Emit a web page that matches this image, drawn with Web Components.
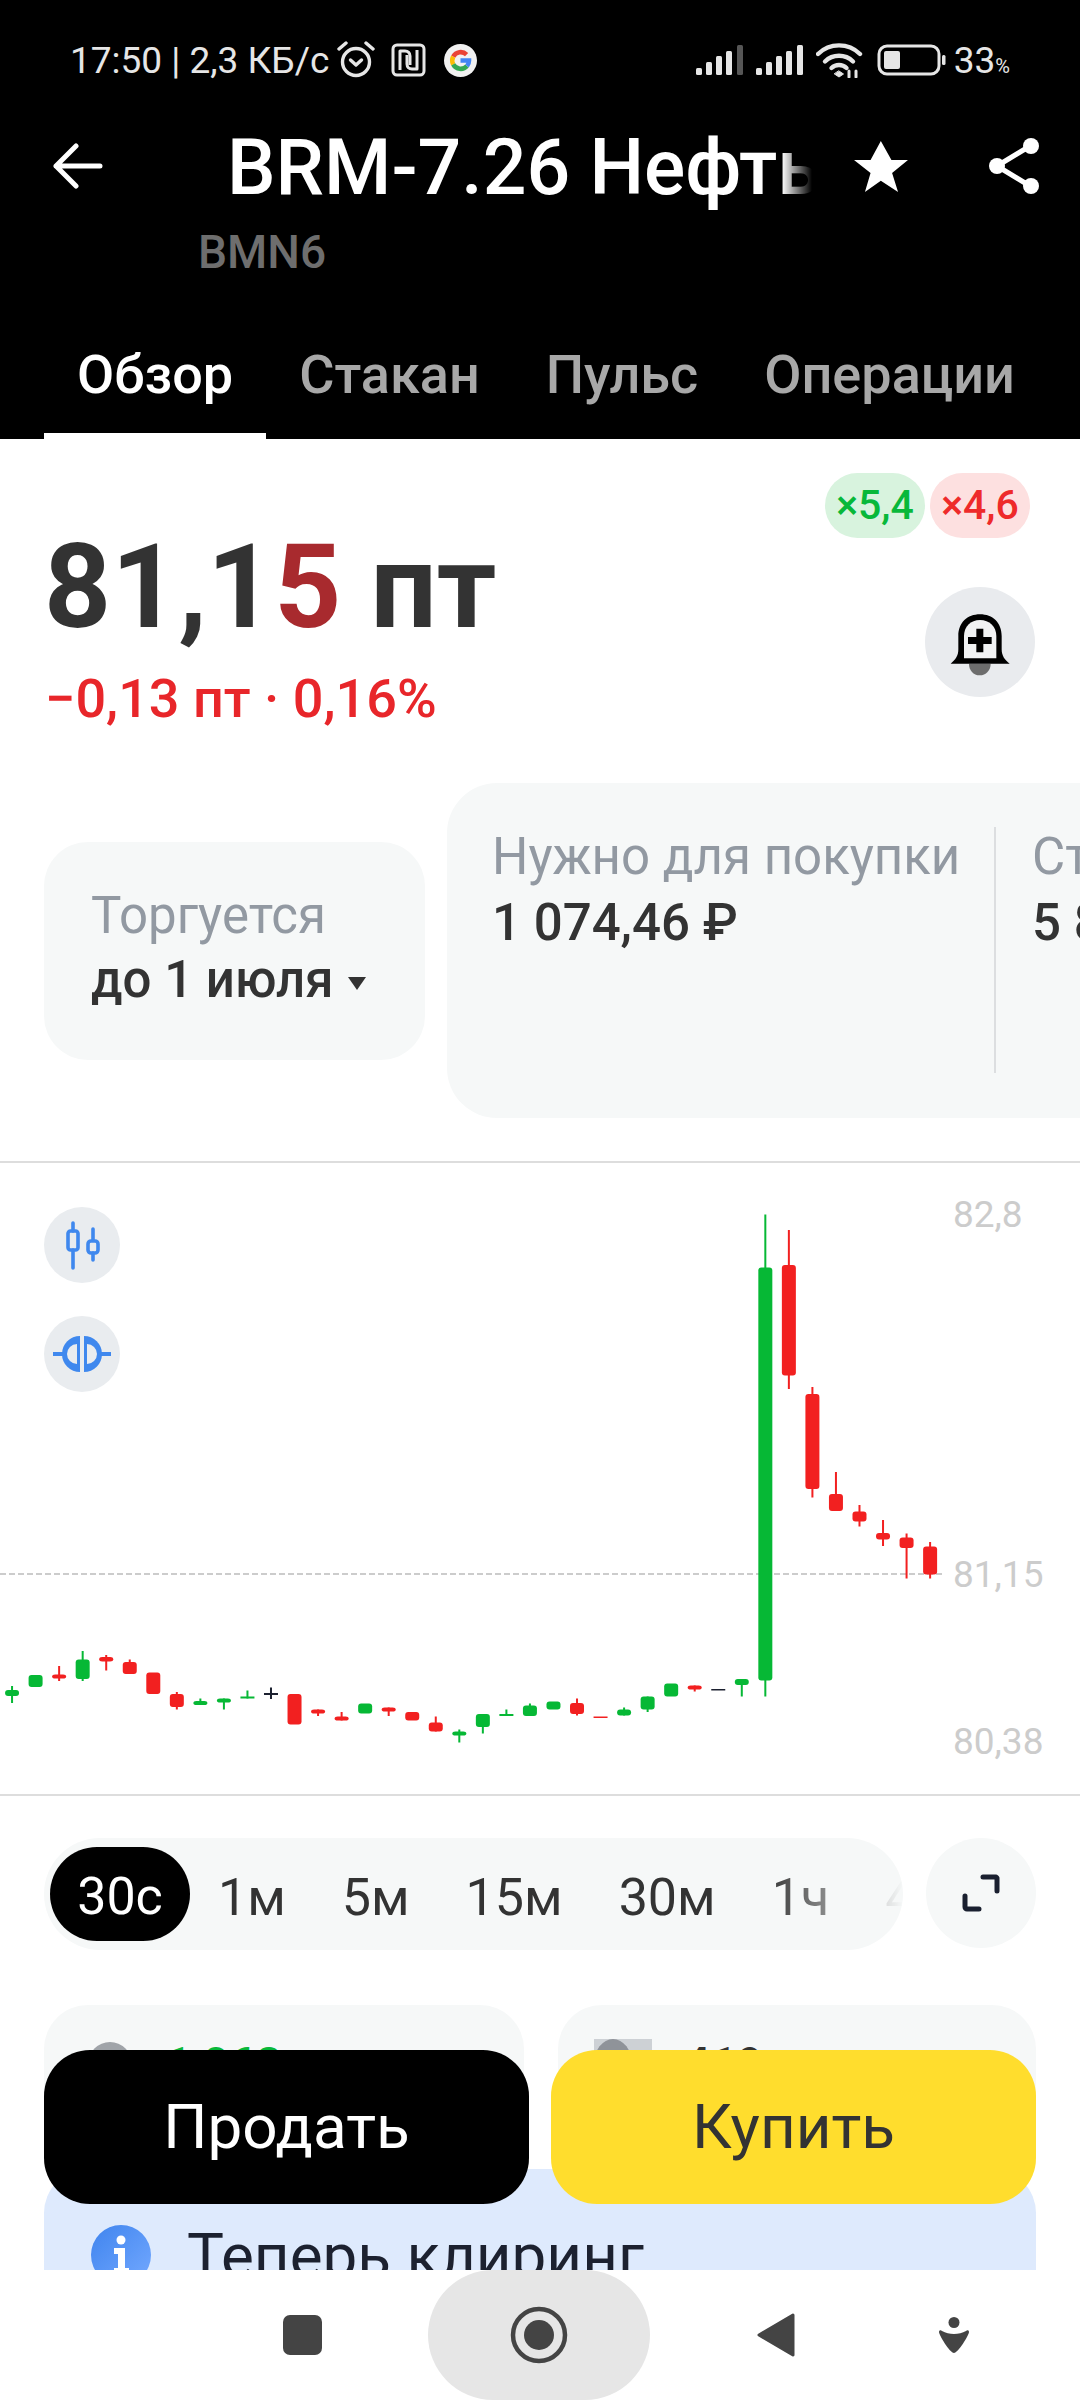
<!DOCTYPE html>
<html lang="ru">
<head>
<meta charset="utf-8">
<title>BRM-7.26</title>
<style>
  html, body { margin: 0; padding: 0; }
  body {
    width: 1080px;
    height: 2400px;
    display: flex;
    flex-direction: column;
    overflow: hidden;
    background: #fff;
    color: #333;
    font-family: Roboto, "Liberation Sans", sans-serif;
  }
  main {
    flex: 1;
    min-height: 0;
    position: relative;
    overflow: hidden;
  }
</style>
</head>
<body>
<app-header></app-header>
<main>
  <quote-head></quote-head>
  <info-cards></info-cards>
  <candle-chart></candle-chart>
  <timeframe-bar></timeframe-bar>
  <stat-cards></stat-cards>
  <notice-card>Теперь клиринг</notice-card>
  <action-buttons></action-buttons>
</main>
<nav-bar></nav-bar>

<script>
class AppHeader extends HTMLElement {
  constructor () {
    super()
    this.shadow = this.attachShadow({ mode: 'open' })
  }

  connectedCallback () {
    this.shadow.innerHTML =
      /* html */`
      <style>
        :host { display: block; background: #000; color: #fff; height: 439px; overflow: hidden; }
        .status { height: 120px; display: flex; align-items: center; justify-content: space-between; padding: 0 70px; box-sizing: border-box; font-size: 37px; color: #e6e6e6; }
        .group { display: flex; align-items: center; }
        .status svg { display: block; flex: none; }
        .pct { font-size: 20px; align-self: flex-end; margin-bottom: 4px; }
        .title-row { height: 92px; display: flex; align-items: center; }
        .back { margin-left: 53px; width: 50px; }
        .title { margin-left: 124px; width: 585px; padding-top: 4px; font-size: 77px; font-weight: 500; white-space: nowrap; overflow: hidden; line-height: 92px; -webkit-mask-image: linear-gradient(to right, #000 555px, transparent 585px); mask-image: linear-gradient(to right, #000 555px, transparent 585px); }
        .star { margin-left: 42px; }
        .share { margin-left: 81px; }
        .sub { height: 80px; line-height: 80px; padding-left: 198px; font-size: 46px; font-weight: 500; color: #6e6e6e; }
        .tabs { height: 147px; padding-left: 44px; display: flex; }
        .tab { padding: 0 33px; height: 147px; box-sizing: border-box; line-height: 166px; font-size: 54px; font-weight: 500; color: #a8a8a8; white-space: nowrap; }
        .tab.on { color: #fff; border-bottom: 6px solid #fff; }
      </style>
      <div class="status">
        <div class="group">
          <span>17:50 | 2,3 КБ/с</span>
          <svg style="margin-left:8px" width="38" height="38" viewBox="0 0 38 38" fill="none" stroke="#e6e6e6" stroke-width="3.4" stroke-linecap="round" stroke-linejoin="round"><circle cx="19" cy="21" r="13.5"/><path d="M13.5 19l5.5 5 5.5-5"/><path d="M2 8l7-6M36 8l-7-6"/></svg>
          <svg style="margin-left:16px" width="35" height="34" viewBox="0 0 35 34" fill="none" stroke="#e6e6e6" stroke-width="3" stroke-linejoin="round"><rect x="2" y="2" width="31" height="30" rx="4"/><path d="M9 27V8h5c3 0 5 2 5 5v9"/><path d="M26 7v19h-5c-3 0-5-2-5-5v-9"/></svg>
          <svg style="margin-left:18px" width="33" height="33" viewBox="0 0 33 33" fill="none"><circle cx="16.5" cy="16.5" r="16.5" fill="#f1f1f1"/><g stroke-width="4.6"><path d="M9.2 12.6A8.5 8.5 0 0 1 22.6 10.6" stroke="#ea4335"/><path d="M9.2 20.4A8.5 8.5 0 0 1 9.2 12.6" stroke="#fbbc05"/><path d="M23 22A8.5 8.5 0 0 1 9.2 20.4" stroke="#34a853"/><path d="M16.5 16.5H25A8.5 8.5 0 0 1 23 22" stroke="#4285f4"/></g></svg>
        </div>
        <div class="group">
          <svg width="47" height="32" viewBox="0 0 47 32" fill="#e6e6e6"><rect y="24" width="6" height="7" rx="1.5"/><rect x="10" y="18" width="6" height="13" rx="1.5"/><rect x="20" y="12" width="6" height="19" rx="1.5"/><rect x="30" y="7" width="6" height="24" rx="1.5"/><rect x="41" y="1" width="6" height="30" rx="1.5" fill="#565656"/></svg>
          <svg style="margin-left:13px" width="47" height="32" viewBox="0 0 47 32" fill="#e6e6e6"><rect y="24" width="6" height="7" rx="1.5"/><rect x="10" y="18" width="6" height="13" rx="1.5"/><rect x="20" y="12" width="6" height="19" rx="1.5"/><rect x="30" y="7" width="6" height="24" rx="1.5"/><rect x="41" y="1" width="6" height="30" rx="1.5"/></svg>
          <svg style="margin-left:13px" width="48" height="36" viewBox="0 0 48 36" fill="none" stroke="#e6e6e6" stroke-width="4.4" stroke-linecap="round"><path d="M2 12a30 30 0 0 1 42 0"/><path d="M9 19.500a20 20 0 0 1 28 0"/><path d="M15.500 26a11 11 0 0 1 15 0"/><path d="M18.500 32l4.500 3 4.500-3-4.500-3z" fill="#e6e6e6" stroke-width="1"/><path d="M33 35v-6M40 29v6" stroke-width="3"/></svg>
          <svg style="margin-left:13px" width="70" height="32" viewBox="0 0 70 32" fill="none"><rect x="2" y="2" width="60" height="28" rx="8" stroke="#e6e6e6" stroke-width="3"/><rect x="7" y="7" width="16" height="18" rx="2" fill="#e6e6e6"/><rect x="65" y="11" width="3.500" height="10" rx="1.500" fill="#e6e6e6"/></svg>
          <span style="margin-left:7px">33</span><span class="pct">%</span>
        </div>
      </div>
      <div class="title-row">
        <svg class="back" height="46" viewBox="0 0 50 46" fill="none" stroke="#fff" stroke-width="5" stroke-linecap="round" stroke-linejoin="round"><path d="M47 23H3M23 3L3 23l20 20"/></svg>
        <div class="title">BRM-7.26 Нефть</div>
        <svg class="star" width="54" height="51" viewBox="222 68 163 154" fill="#fff"><path d="M303 68l32 57h50l-48 40 18 57-52-34-48 34 17-57-50-40h50z"/></svg>
        <svg class="share" width="50" height="56" viewBox="0 0 50 56" fill="#fff" stroke="#fff"><path d="M8 28L41 8M8 28l33 20" fill="none" stroke-width="5"/><circle cx="8" cy="28" r="8" stroke="none"/><circle cx="42" cy="8" r="8" stroke="none"/><circle cx="42" cy="48" r="8" stroke="none"/></svg>
      </div>
      <div class="sub">BMN6</div>
      <div class="tabs">
        <div class="tab on">Обзор</div>
        <div class="tab">Стакан</div>
        <div class="tab">Пульс</div>
        <div class="tab">Операции</div>
      </div>
      `
  }
}

class QuoteHead extends HTMLElement {
  constructor () {
    super()
    this.shadow = this.attachShadow({ mode: 'open' })
  }

  connectedCallback () {
    this.shadow.innerHTML =
      /* html */`
      <style>
        :host { display: grid; grid-template-columns: 1fr auto; height: 344px; padding: 0 45px 0 44px; box-sizing: border-box; }
        .left { padding-top: 78px; }
        .price { font-size: 117px; line-height: 140px; font-weight: 700; color: #333; white-space: nowrap; }
        .price b { color: #a82a2e; font-weight: 700; }
        .change { margin: 12px 0 0 1px; font-size: 54px; line-height: 60px; font-weight: 500; color: #e8262a; white-space: nowrap; }
        .right { padding-top: 34px; display: flex; flex-direction: column; align-items: flex-end; }
        .badges { display: flex; gap: 5px; margin-right: 5px; }
        .badge { height: 65px; line-height: 65px; width: 100px; text-align: center; border-radius: 33px; font-size: 41px; font-weight: 500; white-space: nowrap; }
        .long { background: #d8f3de; color: #08b83a; }
        .short { background: #fde0e0; color: #ee2a2a; }
        .bell { margin-top: 49px; width: 110px; height: 110px; border-radius: 50%; background: #e9ebee; display: flex; align-items: center; justify-content: center; }
      </style>
      <div class="left">
        <div class="price">81,1<b>5</b> пт</div>
        <div class="change">−0,13 пт · 0,16%</div>
      </div>
      <div class="right">
        <div class="badges"><div class="badge long">×5,4</div><div class="badge short">×4,6</div></div>
        <div class="bell">
          <svg width="70" height="70" viewBox="78 78 210 210"><path d="M150 248h65c0 20-14 35-33 35s-32-15-32-35z" fill="#6d6d6d"/><path d="M95 248c15-13 23-23 23-43v-40c0-40 27-65 65-65s65 25 65 65v40c0 20 10 33 24 43z" fill="#000"/><path d="M135 232v-67c0-28 20-48 48-48s49 20 49 48v67z" fill="#f1f2f3"/><path d="M172 143h21v25h25v21h-25v25h-21v-25h-25v-21h25z" fill="#000"/></svg>
        </div>
      </div>
      `
  }
}

class InfoCards extends HTMLElement {
  constructor () {
    super()
    this.shadow = this.attachShadow({ mode: 'open' })
  }

  connectedCallback () {
    this.shadow.innerHTML =
      /* html */`
      <style>
        :host { display: flex; align-items: center; gap: 22px; height: 335px; margin-bottom: 43px; padding-left: 44px; overflow: hidden; white-space: nowrap; }
        .card { flex: none; background: #f6f8f8; box-sizing: border-box; font-size: 51px; line-height: 64px; }
        .label { color: #9299a2; }
        .value { color: #333; font-weight: 500; }
        .expiry { width: 381px; height: 218px; border-radius: 44px; padding: 0 0 6px 47px; display: flex; flex-direction: column; justify-content: center; }
        .arrow { display: inline-block; margin-left: 14px; vertical-align: 7px; border: 9px solid transparent; border-top: 13px solid #333; border-bottom: 0; }
        .costs { width: 700px; height: 335px; border-radius: 50px; padding: 44px 0 0 45px; display: flex; }
        .col { height: 246px; }
        .col .label { position: relative; top: -2px; }
        .need { width: 502px; border-right: 2px solid #dcdee0; }
        .cost { padding-left: 36px; }
      </style>
      <div class="card expiry">
        <div class="label">Торгуется</div>
        <div class="value">до 1 июля<span class="arrow"></span></div>
      </div>
      <div class="card costs">
        <div class="col need">
          <div class="label">Нужно для покупки</div>
          <div class="value">1 074,46 ₽</div>
        </div>
        <div class="col cost">
          <div class="label">Ст</div>
          <div class="value">5 8</div>
        </div>
      </div>
      `
  }
}

class CandleChart extends HTMLElement {
  constructor () {
    super()
    this.shadow = this.attachShadow({ mode: 'open' })

    // color, wick top, wick bottom, body top, body bottom (px from the top of the chart)
    this.data = [
      ['g', 524, 541, 528, 534], ['g', 0, 0, 513, 525], ['r', 504, 519, 512.5, 516.5], ['g', 489, 519, 497.5, 517],
      ['r', 493, 508.5, 495, 499.5], ['r', 497.5, 512, 500, 512], ['r', 0, 0, 510.5, 532], ['r', 530, 547.5, 532, 545],
      ['g', 536.5, 543, 539, 543], ['g', 536.5, 547.5, 536.5, 540.5], ['g', 528.5, 536.5, 534.5, 536.5], ['k', 525.5, 537, 531, 533],
      ['r', 0, 0, 532, 562.5], ['r', 547.5, 554, 547.5, 551.5], ['r', 550, 558.5, 554.5, 558.5], ['g', 0, 0, 541.5, 551.5],
      ['r', 545.5, 554, 545.5, 549.5], ['r', 0, 0, 550, 558.5], ['r', 554.5, 569.5, 560.5, 569.5], ['g', 567.5, 580.5, 569.5, 573.5],
      ['g', 552, 571.5, 552, 565], ['g', 547.5, 554, 552, 554], ['g', 541.5, 554, 543.5, 554], ['g', 0, 0, 539.5, 547.5],
      ['r', 536.5, 553.5, 541, 552], ['r', 0, 0, 554.5, 556], ['g', 545.5, 553.5, 547.5, 553.5], ['g', 534.5, 550, 534.5, 547.5],
      ['g', 0, 0, 521.5, 534.5], ['r', 523.5, 529.5, 523.5, 527.5], ['k', 0, 0, 527, 528.5], ['g', 517, 534.5, 517, 523],
      ['g', 52.5, 534.5, 105.5, 518.5], ['r', 68, 227, 103, 213.5], ['r', 225, 335.5, 232, 327], ['r', 310, 349, 332, 349],
      ['r', 343, 364.5, 349.5, 359.5], ['r', 358, 384, 371, 377.5], ['r', 371.5, 416.5, 375.5, 386], ['r', 380, 416.5, 384.5, 412.5]
    ]
  }

  connectedCallback () {
    const colors = { g: '#06b835', r: '#f22020', k: '#1c2130' }
    const candles = this.data.map((candle, i) => {
      const [color, wickTop, wickBottom, bodyTop, bodyBottom] = candle
      const x = 12.05 + i * 23.54
      const fill = colors[color]
      const wick = wickTop ? `<rect x="${x - 1}" y="${wickTop}" width="2" height="${wickBottom - wickTop}" fill="${fill}"/>` : ''
      const thin = bodyBottom - bodyTop < 3
      return `${wick}<rect x="${x - 7}" y="${bodyTop}" width="14" height="${bodyBottom - bodyTop}" rx="${thin ? 0 : 3}" fill="${fill}"/>`
    }).join('')

    this.shadow.innerHTML =
      /* html */`
      <style>
        :host { display: block; position: relative; height: 635px; box-sizing: border-box; border-top: 2px solid #dddddd; border-bottom: 2px solid #dddddd; }
        svg.plot { position: absolute; left: 0; top: -1px; }
        .tool { position: absolute; left: 44px; width: 76px; height: 76px; border-radius: 50%; background: #e9ecef; display: flex; align-items: center; justify-content: center; }
        .price { position: absolute; left: 953px; font-size: 37px; line-height: 44px; color: #cccccc; }
      </style>
      <svg class="plot" width="1080" height="633" viewBox="0 0 1080 633">
        <line x1="0" y1="412" x2="942" y2="412" stroke="#cccccc" stroke-width="2" stroke-dasharray="6 3"/>
        ${candles}
      </svg>
      <div class="tool" style="top:44px">
        <svg width="40" height="50" viewBox="0 0 40 50" fill="none" stroke="#3f88ee" stroke-width="3.6" stroke-linecap="round" stroke-linejoin="round"><path d="M11 3v8M11 30v18"/><rect x="6" y="11" width="10" height="19" rx="2.500"/><path d="M31 9v11M31 33v7"/><rect x="26" y="21" width="10" height="12" rx="3"/></svg>
      </div>
      <div class="tool" style="top:153px">
        <svg width="58" height="36" viewBox="0 0 58 36" fill="#3f88ee"><path d="M0 16h10v4H0zM48 16h10v4H48z"/><path d="M27 0v36a18 18 0 0 1 0-36z"/><path d="M31 0a18 18 0 0 1 0 36z"/><path d="M24 8v20a10 10 0 0 1 0-20zM34 8a10 10 0 0 1 0 20z" fill="#e9ecef"/></svg>
      </div>
      <div class="price" style="top:30px">82,8</div>
      <div class="price" style="top:390px">81,15</div>
      <div class="price" style="top:557px">80,38</div>
      `
  }
}

class TimeframeBar extends HTMLElement {
  constructor () {
    super()
    this.shadow = this.attachShadow({ mode: 'open' })
  }

  connectedCallback () {
    const frames = ['1м', '5м', '15м', '30м', '1ч', '4ч']
    this.shadow.innerHTML =
      /* html */`
      <style>
        :host { display: flex; gap: 23px; margin: 42px 44px 0 44px; height: 112px; }
        .bar { flex: none; width: 859px; background: #f6f8f8; border-radius: 56px; box-sizing: border-box; padding: 9px 0 9px 6px; overflow: hidden; }
        .items { display: flex; align-items: center; height: 94px; font-size: 52px; color: #333; white-space: nowrap; -webkit-mask-image: linear-gradient(to right, #000 715px, transparent 853px); mask-image: linear-gradient(to right, #000 715px, transparent 853px); }
        .item { padding: 6px 28px 0; }
        .on { flex: none; width: 140px; height: 94px; line-height: 100px; border-radius: 47px; background: #000; color: #fff; text-align: center; }
        .expand { width: 110px; height: 110px; border-radius: 50%; background: #f6f8f8; display: flex; align-items: center; justify-content: center; }
      </style>
      <div class="bar">
        <div class="items">
          <div class="on">30с</div>
          ${frames.map(frame => `<div class="item">${frame}</div>`).join('')}
        </div>
      </div>
      <div class="expand">
        <svg width="40" height="40" viewBox="0 0 40 40" fill="none" stroke="#1a2030" stroke-width="5" stroke-linecap="round" stroke-linejoin="round"><path d="M22 4h13a2 2 0 0 1 1 1v13M4 23v11a2 2 0 0 0 2 2h12"/></svg>
      </div>
      `
  }
}

class StatCards extends HTMLElement {
  constructor () {
    super()
    this.shadow = this.attachShadow({ mode: 'open' })
  }

  connectedCallback () {
    this.shadow.innerHTML =
      /* html */`
      <style>
        :host { display: grid; grid-template-columns: 480px 478px; gap: 34px; margin: 55px 0 0 44px; height: 140px; }
        .card { background: #f6f8f8; border-radius: 44px 44px 0 0; display: flex; align-items: flex-start; padding-top: 37px; box-sizing: border-box; font-size: 46px; line-height: 44px; font-weight: 700; }
        .dot { width: 44px; height: 44px; border-radius: 50%; background: #a0a4a9; margin: 0 33px 0 44px; }
        .square { width: 58px; height: 50px; margin: -3px 32px 0 36px; background: #cdd1d5; position: relative; overflow: hidden; }
        .square::before { content: ""; position: absolute; left: 0; top: 0; width: 38px; height: 50px; border-radius: 50%; background: #8f9399; }
      </style>
      <div class="card" style="color:#08b83a"><div class="dot"></div>1 068</div>
      <div class="card" style="color:#333"><div class="square"></div>419</div>
      `
  }
}

class NoticeCard extends HTMLElement {
  constructor () {
    super()
    this.shadow = this.attachShadow({ mode: 'open' })
  }

  connectedCallback () {
    this.shadow.innerHTML =
      /* html */`
      <style>
        :host { display: flex; gap: 37px; margin: 24px 44px 0 44px; height: 200px; padding: 56px 0 0 47px; box-sizing: border-box; background: #deeafd; border-radius: 44px; color: #1c2130; font-size: 62px; line-height: 68px; }
        svg { flex: none; }
        .text { margin: -3px 0 0 -1px; }
      </style>
      <svg width="60" height="60" viewBox="0 0 60 60">
        <defs><linearGradient id="info" x1="0" y1="0" x2="1" y2="1"><stop offset="0" stop-color="#3f84ee"/><stop offset="1" stop-color="#74a9ff"/></linearGradient></defs>
        <circle cx="30" cy="30" r="30" fill="url(#info)"/>
        <circle cx="30" cy="15" r="4.500" fill="#fff"/>
        <path d="M23 23h11v20h4v7H23v-7h4V29h-4z" fill="#fff"/>
      </svg>
      <div class="text"><slot></slot></div>
      `
  }
}

class ActionButtons extends HTMLElement {
  constructor () {
    super()
    this.shadow = this.attachShadow({ mode: 'open' })
  }

  connectedCallback () {
    this.shadow.innerHTML =
      /* html */`
      <style>
        :host { position: absolute; left: 44px; right: 44px; bottom: 66px; display: grid; grid-template-columns: 485px 485px; gap: 22px; }
        .btn { height: 154px; line-height: 154px; border-radius: 46px; text-align: center; font-size: 62px; }
        .sell { background: #000; color: #fff; }
        .buy { background: #ffdd2d; color: #333; }
      </style>
      <div class="btn sell">Продать</div>
      <div class="btn buy">Купить</div>
      `
  }
}

class NavBar extends HTMLElement {
  constructor () {
    super()
    this.shadow = this.attachShadow({ mode: 'open' })
  }

  connectedCallback () {
    this.shadow.innerHTML =
      /* html */`
      <style>
        :host { display: grid; grid-template-columns: 222px 222px 222px 104px; gap: 15px; padding-left: 191px; height: 130px; background: #fff; flex: none; }
        .slot { display: flex; align-items: center; justify-content: center; height: 130px; }
        .on { background: #e6e6e6; border-radius: 65px; }
      </style>
      <div class="slot"><svg width="39" height="40"><rect width="39" height="40" rx="7" fill="#444"/></svg></div>
      <div class="slot on"><svg width="58" height="58" viewBox="0 0 58 58"><circle cx="29" cy="29" r="26" fill="none" stroke="#444" stroke-width="4.500"/><circle cx="29" cy="29" r="15" fill="#444"/></svg></div>
      <div class="slot"><svg width="38" height="46" viewBox="0 0 38 46"><path d="M36 3L2 23l34 20z" fill="#444" stroke="#444" stroke-width="3" stroke-linejoin="round"/></svg></div>
      <div class="slot"><svg width="32" height="36" viewBox="0 0 32 36" fill="#444"><circle cx="16" cy="5.500" r="5.500"/><path d="M1 15c0-2 2-2 3-1 7 4 17 4 24 0 1-1 3-1 3 1 0 3-11 21-15 21S1 18 1 15z"/></svg></div>
      `
  }
}

customElements.define('app-header', AppHeader)
customElements.define('quote-head', QuoteHead)
customElements.define('info-cards', InfoCards)
customElements.define('candle-chart', CandleChart)
customElements.define('timeframe-bar', TimeframeBar)
customElements.define('stat-cards', StatCards)
customElements.define('notice-card', NoticeCard)
customElements.define('action-buttons', ActionButtons)
customElements.define('nav-bar', NavBar)
</script>
</body>
</html>
